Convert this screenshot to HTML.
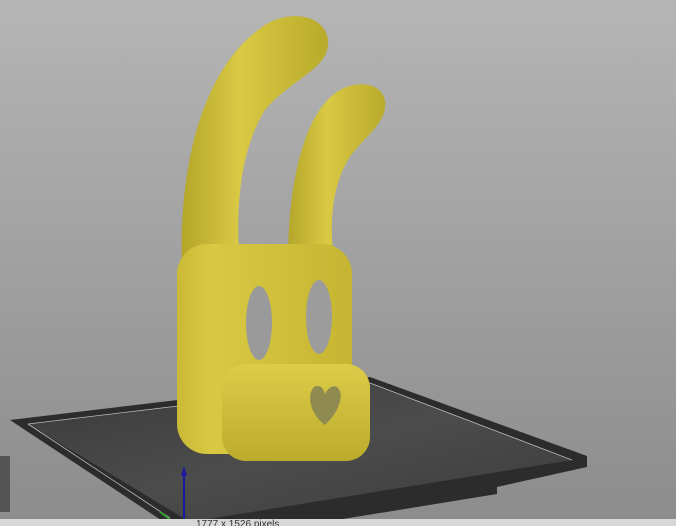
<!DOCTYPE html>
<html><head><style>
html,body{margin:0;padding:0;width:676px;height:526px;overflow:hidden}
</style></head><body>
<svg width="676" height="526" viewBox="0 0 676 526" xmlns="http://www.w3.org/2000/svg">
<defs>
<linearGradient id="bg" x1="0" y1="0" x2="0" y2="1">
<stop offset="0" stop-color="#b5b5b5"/><stop offset="1" stop-color="#8c8c8c"/></linearGradient>
<linearGradient id="plate" x1="0" y1="0" x2="1" y2="1">
<stop offset="0" stop-color="#3a3a3a"/><stop offset="0.5" stop-color="#4c4c4c"/><stop offset="1" stop-color="#3a3a3a"/></linearGradient>
<linearGradient id="ear" x1="0" y1="0" x2="1" y2="0">
<stop offset="0" stop-color="#b4a62a"/><stop offset="0.4" stop-color="#d9c944"/><stop offset="1" stop-color="#b8aa2a"/></linearGradient>
<linearGradient id="head" x1="0" y1="0" x2="1" y2="0">
<stop offset="0" stop-color="#c9b935"/><stop offset="0.2" stop-color="#d8c842"/><stop offset="1" stop-color="#c6b532"/></linearGradient>
<linearGradient id="snout" x1="0" y1="0" x2="0" y2="1">
<stop offset="0" stop-color="#dccc48"/><stop offset="1" stop-color="#bcac2c"/></linearGradient>
</defs>
<rect width="676" height="526" fill="url(#bg)"/>
<polygon points="10,420 370,377 587,456 587,467 497,487 497,494 300,526 170,526" fill="#2c2c2c"/>
<polygon points="28,424 370,383 572,460 190,522" fill="url(#plate)"/>
<polyline points="28,424 370,383 572,460" fill="none" stroke="#bbb" stroke-width="0.8"/>
<line x1="28" y1="424" x2="170" y2="518" stroke="#bbb" stroke-width="0.8"/>
<!-- ears -->
<path d="M182,268 C178,160 205,60 270,22 C300,8 330,20 328,45 C326,70 290,80 265,110 C240,150 235,210 240,265 Z" fill="url(#ear)"/>
<path d="M288,262 C288,180 305,110 340,90 C362,78 388,85 385,108 C382,128 360,140 348,160 C330,190 330,230 334,262 Z" fill="url(#ear)"/>
<!-- head -->
<rect x="177" y="244" width="175" height="210" rx="30" fill="url(#head)"/>
<ellipse cx="259" cy="323" rx="13" ry="37" fill="#9a9a9a"/>
<ellipse cx="319" cy="317" rx="13" ry="37" fill="#9c9c9c"/>
<!-- snout -->
<rect x="222" y="364" width="148" height="97" rx="24" fill="url(#snout)"/>
<path d="M325,425 C305,410 308,385 318,386 C322,386 325,392 325,395 C326,390 332,384 337,387 C345,392 340,412 325,425 Z" fill="#8f8a50"/>
<path d="M325,425 C338,413 346,395 337,387 C345,392 340,412 325,425 Z" fill="#d8cc60"/>
<!-- axes -->
<line x1="184" y1="470" x2="184" y2="526" stroke="#1a1aa0" stroke-width="2"/>
<polygon points="184,466 181,476 187,476" fill="#1a1aa0"/>
<line x1="160" y1="512" x2="176" y2="524" stroke="#2a9a2a" stroke-width="2"/>
<!-- left panel -->
<rect x="0" y="456" width="10" height="56" fill="#555"/>
<rect x="0" y="519" width="676" height="7" fill="#d8d8d8"/>
<text x="196" y="527" font-family="Liberation Sans, sans-serif" font-size="10" fill="#333">1777 x 1526 pixels</text>
</svg>
</body></html>
